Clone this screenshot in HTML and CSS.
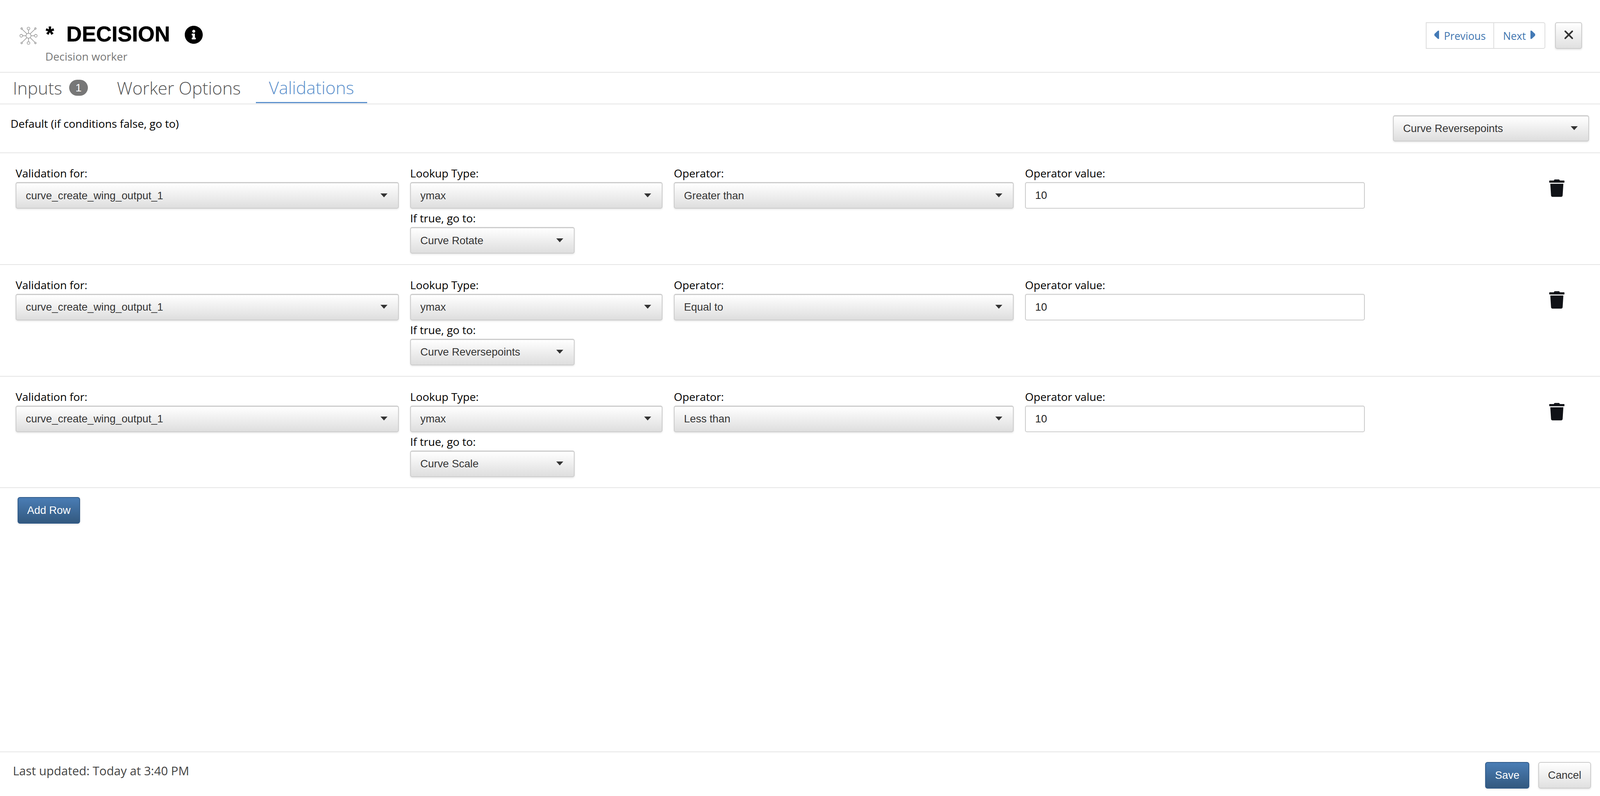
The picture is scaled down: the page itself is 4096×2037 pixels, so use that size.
FILE: index.html
```html
<!DOCTYPE html>
<html lang="en">
<head>
<meta charset="utf-8">
<title>Decision worker</title>
<link rel="stylesheet" href="styles.css">
</head>
<body>
<div class="page">
  <header class="head">
    <div class="head-left">
      <svg class="node-icon" viewBox="0 0 46 46" fill="none" stroke="#8a8a8a" stroke-width="1.4">
        <circle cx="23" cy="23" r="6.5"/><circle cx="23" cy="4" r="3.6"/><circle cx="23" cy="42" r="3.6"/><circle cx="4" cy="23" r="3.6"/><circle cx="42" cy="23" r="3.6"/><circle cx="5" cy="4" r="2"/><circle cx="41" cy="4" r="2"/><circle cx="5" cy="42" r="2"/><circle cx="41" cy="42" r="2"/>
        <path d="M23 7.6V16.5M23 29.500V38.400M7.600 23H16.500M29.500 23H38.400M6.200 5.800L19.300 18.300M39.800 5.800L26.700 18.300M6.200 40.200L19.300 27.700M39.800 40.200L26.700 27.700"/>
      </svg>
      <div class="head-text">
        <div class="title-line">
          <h1 class="title">* DECISION</h1>
          <svg class="info-icon" viewBox="8 8 496 496"><path d="M256 8C119 8 8 119 8 256s111 248 248 248 248-111 248-248S393 8 256 8zm0 110c23.196 0 42 18.804 42 42s-18.804 42-42 42-42-18.804-42-42 18.804-42 42-42zm56 254c0 6.627-5.373 12-12 12h-88c-6.627 0-12-5.373-12-12v-24c0-6.627 5.373-12 12-12h12v-64h-12c-6.627 0-12-5.373-12-12v-24c0-6.627 5.373-12 12-12h64c6.627 0 12 5.373 12 12v100h12c6.627 0 12 5.373 12 12v24z"/></svg>
        </div>
        <div class="subtitle">Decision worker</div>
      </div>
    </div>
    <div class="head-right">
      <div class="pager">
        <a class="pager-btn pager-prev"><svg class="tri" viewBox="0 0 14 24"><path d="M13 1.500V22.500L10 22.500L1.500 14.500Q0 12 1.500 9.500L10 1.500Z"/></svg>Previous</a>
        <a class="pager-btn pager-next">Next<svg class="tri" viewBox="0 0 14 24"><path d="M1 1.500V22.500L4 22.500L12.500 14.500Q14 12 12.500 9.500L4 1.500Z"/></svg></a>
      </div>
      <button class="close-btn"><svg viewBox="0 0 24 24" class="close-x"><path d="M3 3L21 21M21 3L3 21"/></svg></button>
    </div>
  </header>

  <nav class="tabs">
    <a class="tab tab-first">Inputs<span class="badge">1</span></a>
    <a class="tab tab-second">Worker Options</a>
    <a class="tab tab-active">Validations</a>
  </nav>

  <section class="default-row">
    <div class="default-label">Default (if conditions false, go to)</div>
    <div class="select select-default"><span>Curve Reversepoints</span><i class="caret"></i></div>
  </section>

  <section class="rule">
    <div class="fields">
      <div class="field"><label class="label">Validation for:</label><div class="select"><span>curve_create_wing_output_1</span><i class="caret"></i></div></div>
      <div class="field"><label class="label">Lookup Type:</label><div class="select"><span>ymax</span><i class="caret"></i></div>
        <label class="label label-sub">If true, go to:</label><div class="select select-goto"><span>Curve Rotate</span><i class="caret"></i></div></div>
      <div class="field"><label class="label">Operator:</label><div class="select"><span>Greater than</span><i class="caret"></i></div></div>
      <div class="field"><label class="label">Operator value:</label><div class="input">10</div></div>
    </div>
    <svg class="trash" viewBox="0 0 448 512"><path d="M432 32H312l-9.4-18.7A24 24 0 0 0 281.1 0H166.8a23.72 23.72 0 0 0-21.4 13.3L136 32H16A16 16 0 0 0 0 48v32a16 16 0 0 0 16 16h416a16 16 0 0 0 16-16V48a16 16 0 0 0-16-16zM53.2 467a48 48 0 0 0 47.9 45h245.8a48 48 0 0 0 47.9-45L416 128H32z"/></svg>
  </section>

  <section class="rule">
    <div class="fields">
      <div class="field"><label class="label">Validation for:</label><div class="select"><span>curve_create_wing_output_1</span><i class="caret"></i></div></div>
      <div class="field"><label class="label">Lookup Type:</label><div class="select"><span>ymax</span><i class="caret"></i></div>
        <label class="label label-sub">If true, go to:</label><div class="select select-goto"><span>Curve Reversepoints</span><i class="caret"></i></div></div>
      <div class="field"><label class="label">Operator:</label><div class="select"><span>Equal to</span><i class="caret"></i></div></div>
      <div class="field"><label class="label">Operator value:</label><div class="input">10</div></div>
    </div>
    <svg class="trash" viewBox="0 0 448 512"><path d="M432 32H312l-9.4-18.7A24 24 0 0 0 281.1 0H166.8a23.72 23.72 0 0 0-21.4 13.3L136 32H16A16 16 0 0 0 0 48v32a16 16 0 0 0 16 16h416a16 16 0 0 0 16-16V48a16 16 0 0 0-16-16zM53.2 467a48 48 0 0 0 47.9 45h245.8a48 48 0 0 0 47.9-45L416 128H32z"/></svg>
  </section>

  <section class="rule">
    <div class="fields">
      <div class="field"><label class="label">Validation for:</label><div class="select"><span>curve_create_wing_output_1</span><i class="caret"></i></div></div>
      <div class="field"><label class="label">Lookup Type:</label><div class="select"><span>ymax</span><i class="caret"></i></div>
        <label class="label label-sub">If true, go to:</label><div class="select select-goto"><span>Curve Scale</span><i class="caret"></i></div></div>
      <div class="field"><label class="label">Operator:</label><div class="select"><span>Less than</span><i class="caret"></i></div></div>
      <div class="field"><label class="label">Operator value:</label><div class="input">10</div></div>
    </div>
    <svg class="trash" viewBox="0 0 448 512"><path d="M432 32H312l-9.4-18.7A24 24 0 0 0 281.1 0H166.8a23.72 23.72 0 0 0-21.4 13.3L136 32H16A16 16 0 0 0 0 48v32a16 16 0 0 0 16 16h416a16 16 0 0 0 16-16V48a16 16 0 0 0-16-16zM53.2 467a48 48 0 0 0 47.9 45h245.8a48 48 0 0 0 47.9-45L416 128H32z"/></svg>
  </section>

  <div class="add-wrap"><button class="btn btn-primary btn-add">Add Row</button></div>

  <footer class="foot">
    <div class="updated">Last updated: Today at 3:40 PM</div>
    <div class="foot-btns">
      <button class="btn btn-primary btn-save">Save</button>
      <button class="btn btn-default btn-cancel">Cancel</button>
    </div>
  </footer>
</div>
</body>
</html>
```
FILE: styles.css
```css
* { box-sizing: border-box; }
html, body { margin: 0; padding: 0; height: 100%; background: #fff; }
body { font-family: "Open Sans", sans-serif; color: #000; overflow: hidden; }
.page { height: 2037px; display: flex; flex-direction: column; }

.head { height: 185.5px; flex: none; display: flex; justify-content: space-between; border-bottom: 2px solid #e5e5e5; }
.head-left { display: flex; align-items: flex-start; padding: 69px 0 0 50px; }
.node-icon { width: 46px; height: 45px; flex: none; }
.head-text { margin-left: 20px; margin-top: -15px; }
.title-line { display: flex; align-items: center; height: 66px; }
.title { margin: 0 0 0 1px; font: 700 55px/66px "Liberation Sans", sans-serif; word-spacing: 16px; color: #000; -webkit-text-stroke: 0.6px #000; }
.info-icon { width: 46px; height: 46px; margin-left: 37px; margin-top: 4px; fill: #000; }
.subtitle { font-size: 28px; line-height: 38px; color: #777; margin-top: 5px; }
.head-right { display: flex; align-items: flex-start; padding: 57px 46px 0 0; }
.pager { display: flex; height: 68px; border: 2px solid #ddd; border-radius: 0 5px 5px 0; }
.pager-btn { display: flex; align-items: center; justify-content: center; color: #3f75b0; font-size: 26.7px; }
.pager-prev { width: 173px; border-right: 2px solid #ddd; }
.pager-next { width: 129px; }
.tri { width: 14px; height: 24px; fill: #437ab6; margin-top: -5px; }
.pager-prev .tri { margin-right: 11px; }
.pager-next .tri { margin-left: 11px; }
.close-btn { width: 69px; height: 68px; margin-left: 25px; padding: 0; display: flex; align-items: center; justify-content: center; border: 2px solid #ccc; border-radius: 5px; background: linear-gradient(#fff, #e0e0e0); box-shadow: 0 2px 4px rgba(0,0,0,.12); }
.close-x { width: 24px; height: 24px; margin-top: -5px; stroke: #333; stroke-width: 4; stroke-linecap: round; fill: none; }

.tabs { height: 81.5px; flex: none; display: flex; border-bottom: 2px solid #e5e5e5; font-weight: 300; font-size: 44.6px; color: #555; }
.tab { display: flex; align-items: center; height: 78px; }
.tab-first { margin-left: 33px; }
.tab-second { margin-left: 74px; }
.tab-active { margin-left: 39px; padding: 0 34px 0 33px; color: #5a8fcb; border-bottom: 3px solid #5a8fcb; }
.badge { display: inline-flex; align-items: center; justify-content: center; width: 48px; height: 41px; margin-left: 18px; border-radius: 21px; background: #777; color: #fff; font: 300 28px "Liberation Sans", sans-serif; }

.default-row { height: 125px; flex: none; display: flex; justify-content: space-between; align-items: flex-start; border-bottom: 2px solid #e5e5e5; padding: 28px 28px 0 27px; }
.default-label { font-size: 28.2px; line-height: 38px; margin-top: 2px; }
.select { height: 68px; display: flex; align-items: center; justify-content: space-between; padding: 0 27px 0 24px; border: 2px solid #ccc; border-top-width: 3px; border-radius: 5px; background: linear-gradient(#fff, #dedede); box-shadow: 0 2px 4px rgba(0,0,0,.1); font: 27.4px "Liberation Sans", sans-serif; color: #333; text-shadow: 0 1px 0 #fff; }
.select-default { width: 502px; height: 67px; }
.select-goto { width: 421px; }
.caret { display: block; width: 0; height: 0; border-left: 9.500px solid transparent; border-right: 9.500px solid transparent; border-top: 10px solid #333; margin-top: -2px; }

.rule { height: 285.750px; flex: none; display: flex; border-bottom: 2px solid #e5e5e5; padding: 33px 0 0 40px; position: relative; }
.fields { display: grid; grid-template-columns: 981px 646px 870px 870px; column-gap: 29px; align-items: start; }
.label { display: block; font-size: 28.2px; line-height: 36px; height: 41px; color: #000; }
.label-sub { margin-top: 6px; }
.input { height: 68px; display: flex; align-items: center; padding: 0 24px; border: 2px solid #ccc; border-radius: 5px; box-shadow: inset 0 1px 2px rgba(0,0,0,.08); font: 27.4px "Liberation Sans", sans-serif; color: #222; background: #fff; }
.trash { position: absolute; left: 3966px; top: 67px; width: 39px; height: 45px; fill: #101217; }

.add-wrap { flex: 1; padding: 23px 0 0 45px; }
.btn { height: 68px; padding: 0; border-radius: 6px; font: 27.4px "Liberation Sans", sans-serif; }
.btn-primary { border: 2px solid #2f5a89; background: linear-gradient(#4a7db5, #33597f); color: #fff; box-shadow: 0 2px 4px rgba(0,0,0,.12); }
.btn-default { border: 2px solid #ccc; background: linear-gradient(#fff, #e0e0e0); color: #333; text-shadow: 0 1px 0 #fff; box-shadow: 0 2px 4px rgba(0,0,0,.1); }
.btn-add { width: 160px; }
.btn-save { width: 113px; }
.btn-cancel { width: 135px; margin-left: 23px; }

.foot { height: 114.500px; flex: none; display: flex; justify-content: space-between; border-top: 2px solid #e5e5e5; padding: 25px 23px 0 33px; }
.updated { font-size: 30.9px; line-height: 44px; color: #444; }
.foot-btns { display: flex; align-items: flex-start; }
```
